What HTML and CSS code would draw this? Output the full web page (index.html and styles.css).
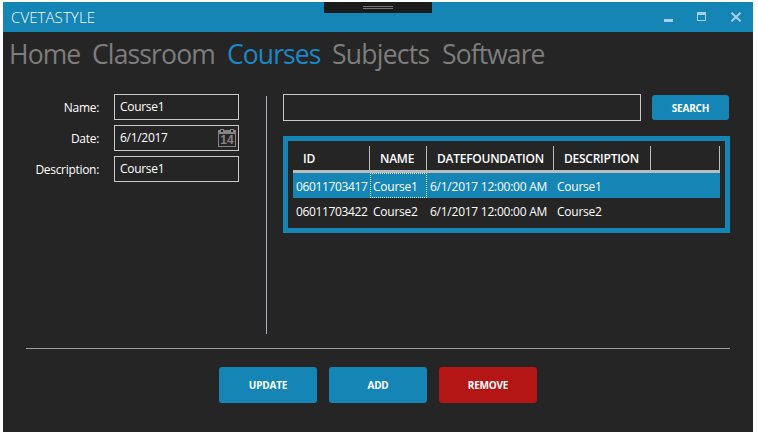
FILE: index.html
```html
<!DOCTYPE html>
<html lang="en">
<head>
<meta charset="utf-8">
<title>CVETASTYLE</title>
<link rel="stylesheet" href="styles.css">
</head>
<body>
<div class="window">
  <header class="titlebar">
    <span class="title">CVETASTYLE</span>
    <div class="grip"><i></i><i></i></div>
    <svg class="controls" width="78" height="10" viewBox="0 0 78 10">
      <path fill="#a5d0e5" d="M0 7h9v3H0z"/>
      <path fill="#a5d0e5" fill-rule="evenodd" d="M33 0h9v9h-9zM34 3v5h7V3z"/>
      <path stroke="#a5d0e5" stroke-width="2" fill="none" d="M67.5 .7l9 8.6M76.500 .7l-9 8.600"/>
    </svg>
  </header>
  <nav class="nav">
    <a class="home">Home</a><a class="classroom">Classroom</a><a class="courses active">Courses</a><a class="subjects">Subjects</a><a class="software">Software</a>
  </nav>
  <main class="main">
    <form class="form">
      <label>Name:</label><div class="input">Course1</div>
      <label>Date:</label><div class="input date"><span>6/1/2017</span>
        <svg width="18" height="18" viewBox="0 0 18 18">
          <path fill="#858585" fill-rule="evenodd" d="M0 1h2V0h4v1h6V0h4v1h2v17H0zM1 5v12h16V5zM3 1v2h2V1zM13 1v2h2V1z"/>
          <text x="9" y="15" text-anchor="middle" class="day">14</text>
        </svg>
      </div>
      <label>Description:</label><div class="input">Course1</div>
    </form>
    <div class="vline"></div>
    <section class="results">
      <div class="search"><div class="query"></div><div class="button">SEARCH</div></div>
      <div class="grid">
        <div class="row head"><span>ID</span><span>NAME</span><span>DATEFOUNDATION</span><span>DESCRIPTION</span><span></span></div>
        <div class="row selected"><span class="id">06011703417</span><span class="focus">Course1</span><span>6/1/2017 12:00:00 AM</span><span>Course1</span><span></span></div>
        <div class="row"><span class="id">06011703422</span><span>Course2</span><span>6/1/2017 12:00:00 AM</span><span>Course2</span><span></span></div>
      </div>
    </section>
  </main>
  <footer class="actions">
    <div class="button">UPDATE</div><div class="button">ADD</div><div class="button danger">REMOVE</div>
  </footer>
</div>
</body>
</html>
```
FILE: styles.css
```css
* { box-sizing: border-box; }
body { margin: 0; background: #fff; padding: 2px 0 0 3px; font: 12px/16px "Open Sans", "Noto Sans", sans-serif; color: #fff; }
.window { width: 750px; height: 430px; background: #252525; overflow: hidden; }
.titlebar { position: relative; height: 30px; background: #1585b5; display: flex; justify-content: space-between; padding: 0 11px 0 8px; }
.title { font-size: 15px; line-height: 31px; font-weight: 300; letter-spacing: 0.1px; }
.controls { margin-top: 10px; display: block; }
.grip { position: absolute; left: 321px; top: 0; width: 108px; height: 11px; background: #1b1b1b; padding: 4px 39px 0; }
.grip i { display: block; height: 1px; background: #77777a; margin-bottom: 1px; }
.nav { height: 62px; padding: 3px 0 0 4px; display: flex; font-size: 26.5px; line-height: 38px; color: #7d7d7d; white-space: nowrap; }
.nav a { flex: none; padding-left: 2px; }
.nav .active { color: #1b87c6; }
.home { width: 83px; letter-spacing: -0.9px; }
.classroom { width: 135px; letter-spacing: -0.85px; }
.courses { width: 105px; letter-spacing: -0.9px; }
.subjects { width: 110px; letter-spacing: -0.75px; }
.software { letter-spacing: -0.9px; }
.main { height: 255px; margin: 0 23px; display: flex; border-bottom: 1px solid #9b9f9e; }
.form { width: 213px; display: grid; grid-template-columns: 73px 125px; column-gap: 15px; row-gap: 5px; grid-auto-rows: 26px; align-content: start; letter-spacing: -0.3px; }
label { line-height: 28px; text-align: right; white-space: nowrap; }
.input { border: 1px solid #c9c9c9; line-height: 24px; padding-left: 5px; }
.date { display: flex; justify-content: space-between; padding: 0 2px 0 5px; }
.date svg { margin-top: 3px; }
.day { font: 700 12px "Liberation Sans", sans-serif; letter-spacing: 0; fill: #858585; }
.vline { width: 1px; height: 238px; margin: 2px 16px 0 27px; background: #a9b1bb; }
.results { width: 447px; }
.search { display: flex; gap: 11px; }
.query { width: 358px; height: 27px; border: 1px solid #c9c9c9; }
.button { background: #1585b5; border-radius: 3px; font-size: 10px; font-weight: 700; text-align: center; letter-spacing: -0.2px; }
.search .button { width: 77px; height: 25px; line-height: 27px; margin-top: 1px; }
.grid { margin-top: 15px; height: 97px; border: 5px solid #1585b5; padding: 5px; white-space: nowrap; }
.row { display: grid; grid-template-columns: 77px 57px 127px 97px 69px; height: 25px; line-height: 28px; letter-spacing: -0.25px; }
.row span { padding-left: 3px; }
.row .id { letter-spacing: -0.35px; }
.head { height: 27px; line-height: 25px; border-bottom: 3px solid #bcbcbc; font-weight: 600; }
.head span { padding-left: 10px; border-right: 1px solid #bcbcbc; }
.selected { background: #1585b5; }
.row .focus { height: 25px; border: 1px dotted #d7eaf2; line-height: 26px; padding-left: 2px; }
.actions { display: flex; justify-content: center; gap: 12px; padding-top: 18px; }
.actions .button { width: 98px; height: 36px; line-height: 37px; }
.actions .danger { background: #b41515; }
```
